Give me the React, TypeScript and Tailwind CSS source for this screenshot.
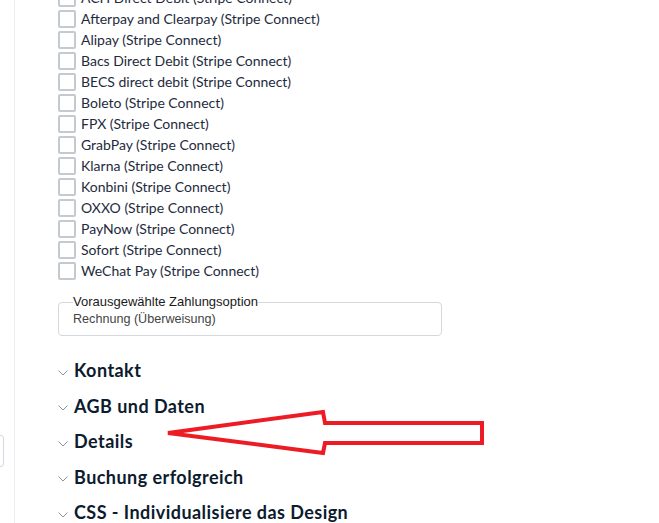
const methods = [
  "ACH Direct Debit (Stripe Connect)",
  "Afterpay and Clearpay (Stripe Connect)",
  "Alipay (Stripe Connect)",
  "Bacs Direct Debit (Stripe Connect)",
  "BECS direct debit (Stripe Connect)",
  "Boleto (Stripe Connect)",
  "FPX (Stripe Connect)",
  "GrabPay (Stripe Connect)",
  "Klarna (Stripe Connect)",
  "Konbini (Stripe Connect)",
  "OXXO (Stripe Connect)",
  "PayNow (Stripe Connect)",
  "Sofort (Stripe Connect)",
  "WeChat Pay (Stripe Connect)",
];

const sections = [
  "Kontakt",
  "AGB und Daten",
  "Details",
  "Buchung erfolgreich",
  "CSS - Individualisiere das Design",
];

function Chevron() {
  return (
    <svg width="10" height="6" viewBox="0 0 10 6" className="shrink-0 mt-[4px]" fill="none">
      <path d="M0.5 0.5 L5 5 L9.5 0.5" stroke="#8792a2" strokeWidth="1" />
    </svg>
  );
}

export default function App() {
  return (
    <div
      className="relative flex h-[523px] w-[659px] overflow-hidden bg-white"
      style={{ fontFamily: "Lato, 'Open Sans', Arial, sans-serif" }}
    >
      {/* left rail, only its edge is visible */}
      <div className="w-[14px] shrink-0">
        <div className="ml-[-10px] mt-[435px] h-[32px] w-[14px] rounded-r-[3px] border border-[#d5d9df]" />
      </div>

      <div className="flex-1 border-l border-[#eceef1] pl-[43px]">
        <ul className="mt-[-13px]">
          {methods.map((m) => (
            <li key={m} className="flex h-[21px] items-center gap-[5px]">
              <span className="h-[18px] w-[18px] shrink-0 rounded-[2px] border-2 border-[#c5cad1] bg-white" />
              <span className="text-[14px] text-[#1e2b3d]">{m}</span>
            </li>
          ))}
        </ul>

        <fieldset
          className="mt-[12px] w-[384px] rounded-[4px] border border-[#d3d8de] pb-[8px] pl-[14px]"
          style={{ fontFamily: "'Liberation Sans', Arial, sans-serif" }}
        >
          <legend className="px-0 text-[13px] leading-[18px] text-[#1a1a1a]">
            Vorausgewählte Zahlungsoption
          </legend>
          <div className="text-[12.6px] leading-[16px] text-[#444]">Rechnung (Überweisung)</div>
        </fieldset>

        <div className="mt-[17px]">
          {sections.map((s) => (
            <div key={s} className="flex h-[35.5px] items-center gap-[6px]">
              <Chevron />
              <span className="text-[18px] font-bold tracking-[0.45px] text-[#0c1b2e]">{s}</span>
            </div>
          ))}
        </div>
      </div>

      {/* red annotation arrow */}
      <svg
        className="pointer-events-none absolute left-0 top-0"
        width="659"
        height="523"
        viewBox="0 0 659 523"
        fill="none"
      >
        <path
          d="M168 433 L323 412 L325 423 L482 423 L482 443 L325 443 L323 453 Z"
          stroke="#ed1c24"
          strokeWidth="4"
          strokeLinejoin="miter"
        />
      </svg>
    </div>
  );
}
